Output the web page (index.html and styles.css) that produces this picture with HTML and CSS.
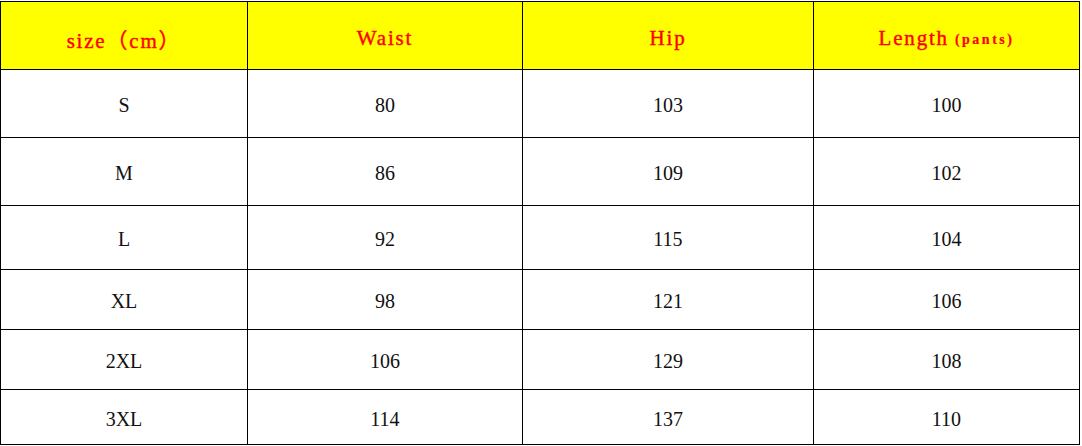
FILE: index.html
```html
<!DOCTYPE html>
<html>
<head>
<meta charset="utf-8">
<link rel="stylesheet" href="styles.css">
</head>
<body>
<div class="table">
  <div class="cell head">size（cm）</div>
  <div class="cell head">Waist</div>
  <div class="cell head">Hip</div>
  <div class="cell head">Length<span class="small">(pants)</span></div>

  <div class="cell r1">S</div><div class="cell r1">80</div><div class="cell r1">103</div><div class="cell r1">100</div>
  <div class="cell r2">M</div><div class="cell r2">86</div><div class="cell r2">109</div><div class="cell r2">102</div>
  <div class="cell r3">L</div><div class="cell r3">92</div><div class="cell r3">115</div><div class="cell r3">104</div>
  <div class="cell r4">XL</div><div class="cell r4">98</div><div class="cell r4">121</div><div class="cell r4">106</div>
  <div class="cell r5">2XL</div><div class="cell r5">106</div><div class="cell r5">129</div><div class="cell r5">108</div>
  <div class="cell r6">3XL</div><div class="cell r6">114</div><div class="cell r6">137</div><div class="cell r6">110</div>
</div>
</body>
</html>
```
FILE: styles.css
```css
html, body {
  margin: 0;
  padding: 0;
  background: #ffffff;
}
body {
  padding-top: 1px;
}
.table {
  display: grid;
  grid-template-columns: 247px 275px 291px 266px;
  width: 1080px;
  box-sizing: border-box;
  border-left: 1px solid #000;
  border-top: 1px solid #000;
}
.cell {
  box-sizing: border-box;
  border-right: 1px solid #000;
  border-bottom: 1px solid #000;
  display: flex;
  align-items: center;
  justify-content: center;
  font-family: "Liberation Serif", "Noto Sans CJK SC", serif;
  font-size: 20px;
  color: #111;
  padding-top: 4px;
}
.head {
  height: 68px;
  background: #ffff00;
  color: #ff0000;
  font-family: "Liberation Serif", "Noto Sans CJK SC", serif;
  font-size: 21px;
  letter-spacing: 1.8px;
  -webkit-text-stroke: 0.4px #ff0000;
  padding-top: 6px;
}
.small {
  font-size: 14px;
  font-weight: bold;
  letter-spacing: 2.5px;
  margin-left: 6px;
  padding-top: 3px;
  -webkit-text-stroke: 0.2px #ff0000;
}
.r1 { height: 68px; }
.r2 { height: 68px; }
.r3 { height: 64px; }
.r4 { height: 60px; }
.r5 { height: 60px; }
.r6 { height: 55px; }
```
